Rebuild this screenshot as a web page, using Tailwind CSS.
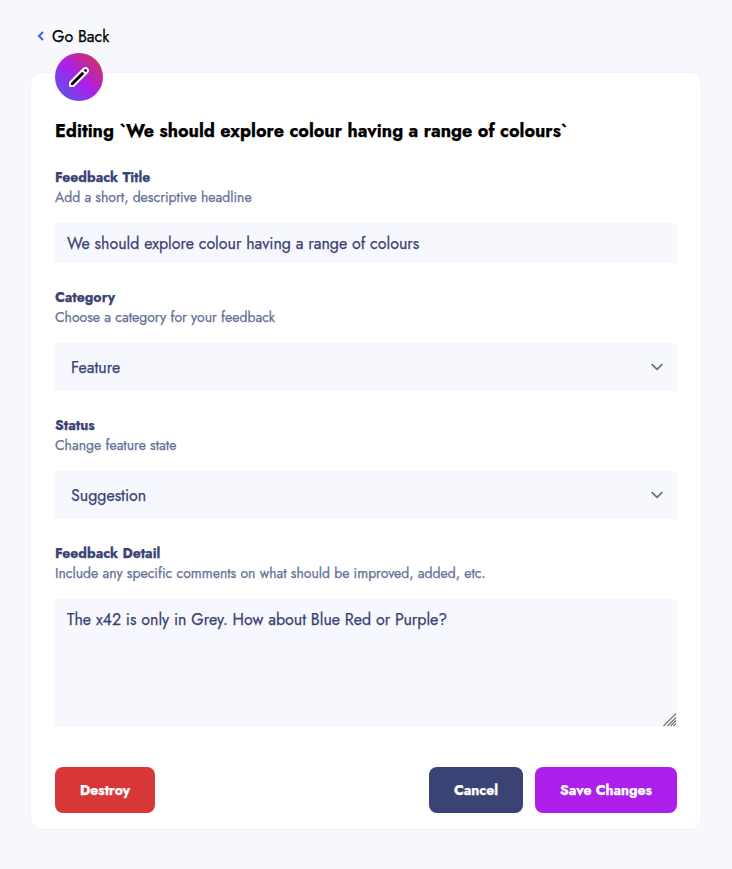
<!DOCTYPE html>
<html lang="en">
<head>
<meta charset="utf-8">
<title>Edit feedback</title>
<script src="https://cdn.jsdelivr.net/npm/@tailwindcss/browser@4"></script>
</head>
<body class="min-h-screen bg-[#f7f8fd] font-[Jost,Lato,sans-serif] text-black [-webkit-text-stroke:0.25px]">
<main class="px-[30px] pt-6">
  <a class="flex h-6 items-center gap-2 pl-[7px] text-base">
    <svg width="7" height="10" viewBox="0 0 7 10" fill="none" stroke="#4661E6" stroke-width="2"><path d="M6 9L2 5l4-4"/></svg>
    <span class="pt-0.5 whitespace-nowrap">Go Back</span>
  </a>
  <section class="relative mt-6 h-[758px] w-[672px] rounded-xl border border-[#f1f2fe] bg-white px-6 pt-[46px]">
    <div class="absolute -top-5 left-6 flex size-12 items-center justify-center rounded-full bg-linear-to-tr/srgb from-[#4661e6] via-[#ad1fea] to-[#d73737]">
      <svg width="24" height="24" viewBox="0 0 24 24" fill="black" stroke="white" stroke-width="2" stroke-linecap="round" stroke-linejoin="round"><path d="M15.232 5.232l3.536 3.536m-2.036-5.036a2.5 2.5 0 113.536 3.536L6.5 21.036H3v-3.572L16.732 3.732z"/></svg>
    </div>
    <h1 class="h-6 text-lg leading-6 font-bold whitespace-nowrap">Editing `We should explore colour having a range of colours`</h1>
    <div class="mt-6 text-sm leading-5 whitespace-nowrap text-[#647196]">
      <h2 class="font-bold text-[#3a4374]">Feedback Title</h2>
      <p>Add a short, descriptive headline</p>
    </div>
    <div class="mt-4 flex h-10 items-center bg-[#f7f8fd] px-3 pt-0.5 text-base text-[#3a4374]">We should explore colour having a range of colours</div>
    <div class="mt-6 text-sm leading-5 whitespace-nowrap text-[#647196]">
      <h2 class="font-bold text-[#3a4374]">Category</h2>
      <p>Choose a category for your feedback</p>
    </div>
    <div class="mt-4 flex h-12 items-center justify-between bg-[#f7f8fd] pr-2 pl-4 text-base text-[#3a4374]"><span class="pt-0.5">Feature</span>
      <svg width="24" height="24" viewBox="0 0 20 20" fill="none" stroke="#6b7280" stroke-width="1.5" stroke-linecap="round" stroke-linejoin="round"><path d="M6 8l4 4 4-4"/></svg>
    </div>
    <div class="mt-6 text-sm leading-5 whitespace-nowrap text-[#647196]">
      <h2 class="font-bold text-[#3a4374]">Status</h2>
      <p>Change feature state</p>
    </div>
    <div class="mt-4 flex h-12 items-center justify-between bg-[#f7f8fd] pr-2 pl-4 text-base text-[#3a4374]"><span class="pt-0.5">Suggestion</span>
      <svg width="24" height="24" viewBox="0 0 20 20" fill="none" stroke="#6b7280" stroke-width="1.5" stroke-linecap="round" stroke-linejoin="round"><path d="M6 8l4 4 4-4"/></svg>
    </div>
    <div class="mt-6 text-sm leading-5 whitespace-nowrap text-[#647196]">
      <h2 class="font-bold text-[#3a4374]">Feedback Detail</h2>
      <p>Include any specific comments on what should be improved, added, etc.</p>
    </div>
    <div class="relative mt-4 h-32 bg-[#f7f8fd] px-3 py-[9px] text-base text-[#3a4374]">The x42 is only in Grey. How about Blue Red or Purple?
      <svg class="absolute right-0 bottom-0" width="15" height="15" viewBox="0 0 15 15" stroke="#777" stroke-width="1.1"><path d="M1.500 14L14 1.500M5.500 14L14 5.500M8.500 14L14 8.500M11.500 14L14 11.500"/></svg>
    </div>
    <div class="mt-10 flex h-[46px] gap-3 text-sm font-bold text-white">
      <button class="mr-auto w-[100px] rounded-lg bg-[#d73737]">Destroy</button>
      <button class="w-[94px] rounded-lg bg-[#3a4374]">Cancel</button>
      <button class="w-[142px] rounded-lg bg-[#ad1fea]">Save Changes</button>
    </div>
  </section>
</main>
</body>
</html>
